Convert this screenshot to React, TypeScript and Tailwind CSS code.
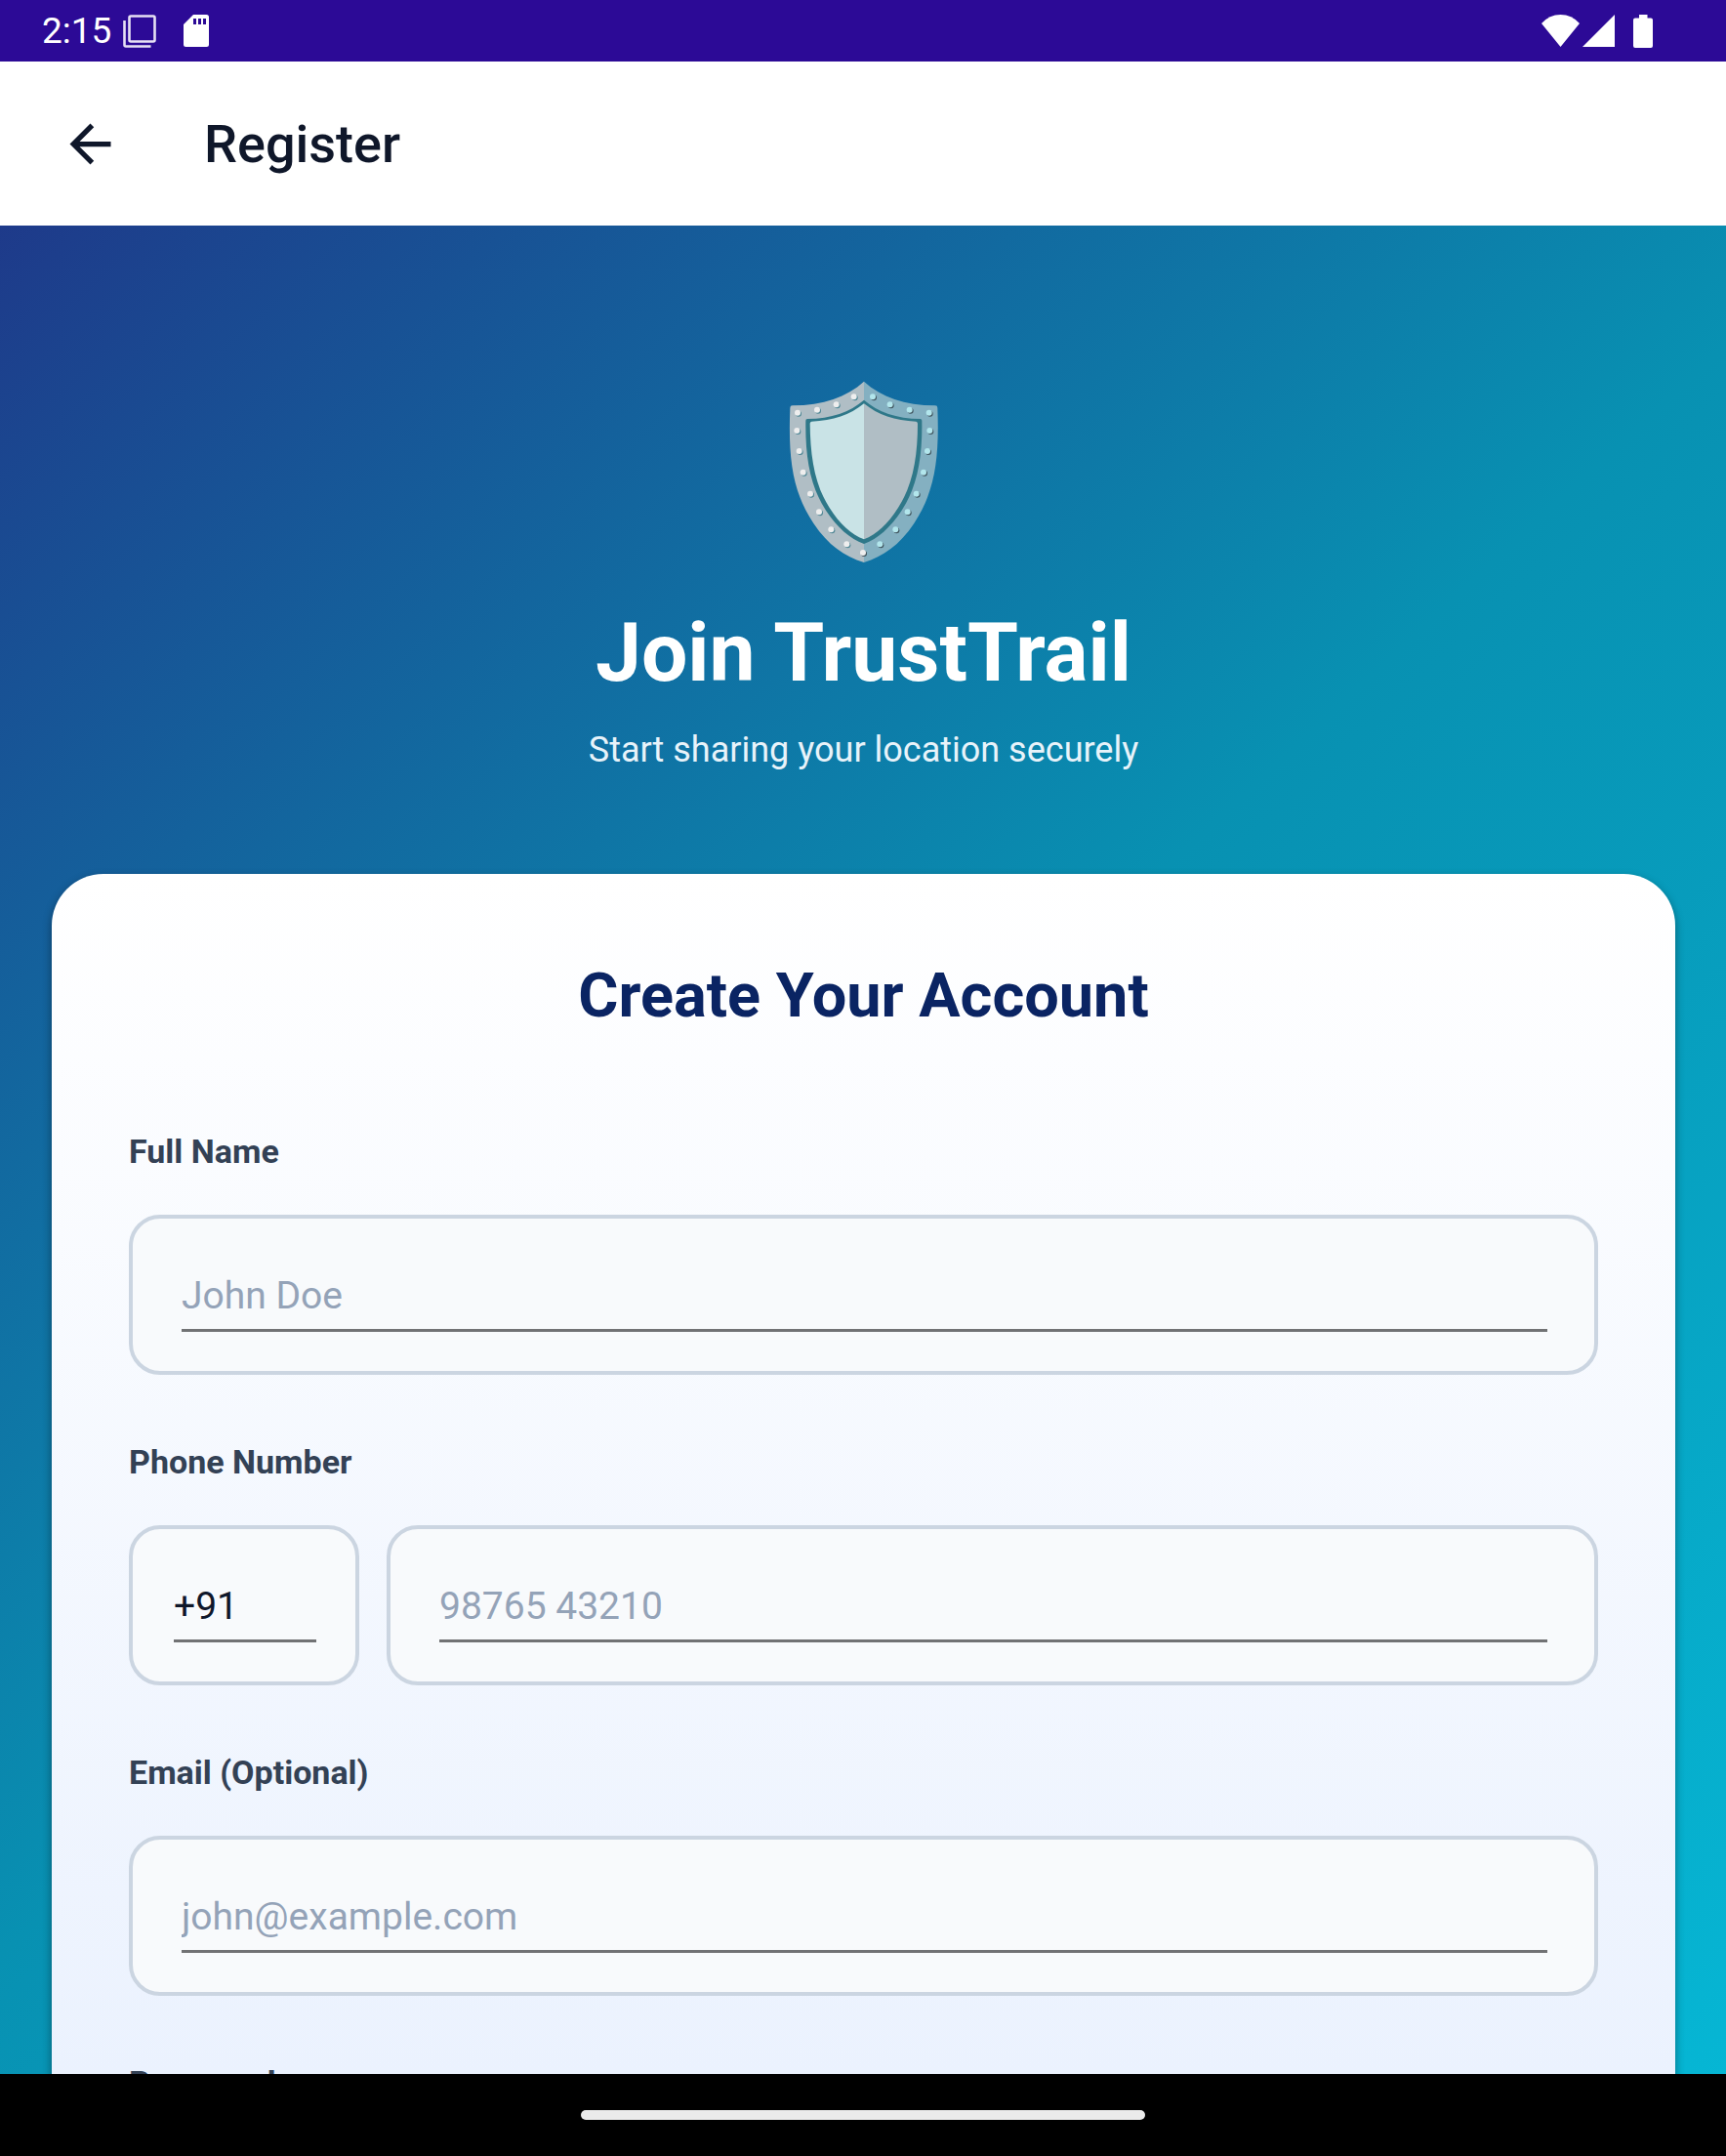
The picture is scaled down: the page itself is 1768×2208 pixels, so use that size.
import { useState } from 'react'
import type { ReactNode } from 'react'

const rivets = [
  [284, 109], [230, 133], [171, 149], [111, 158], [109, 213], [116, 276], [128, 341],
  [150, 407], [177, 463], [214, 517], [262, 562], [312, 588],
]

const rightRivets = [
  [342, 109], [395, 133], [455, 149], [515, 158], [517, 213], [510, 276], [498, 341],
  [476, 407], [449, 463], [412, 517], [364, 562],
]

function ShieldIcon() {
  return (
    <svg viewBox="84 60 462 561" className="h-[187px] w-[154px]" aria-hidden="true">
      <path
        fill="#b0bec5"
        d="M315 62C262 110 190 135 95 136Q88 136 88 143C82 300 95 400 160 498C205 565 255 600 315 618Z"
      />
      <path
        fill="#84b0c1"
        d="M315 62C368 110 440 135 534 136Q541 136 541 143C547 300 533 400 469 498C424 565 374 600 315 618Z"
      />
      <path
        fill="#2f7889"
        d="M315 119C272 156 215 176 141 177Q136 177 136 182C134 295 150 385 198 458C234 512 272 545 315 561C358 545 395 512 431 458C479 385 495 295 493 182Q493 177 488 177C415 176 358 156 315 119Z"
      />
      <path
        fill="#c9e3e6"
        d="M315 130C272 165 220 183 154 185Q149 186 149 191C150 295 164 380 209 450C241 500 275 532 315 547Z"
      />
      <path
        fill="#b0bec5"
        d="M315 130C358 165 410 183 475 185Q480 186 480 191C480 295 465 380 420 450C388 500 354 532 315 547Z"
      />
      {rivets.map(([x, y]) => (
        <g key={`${x}-${y}`}>
          <circle cx={x + 3} cy={y + 3} r="9" fill={x === 312 ? '#3f5059' : '#4f8795'} />
          <circle cx={x} cy={y} r="9" fill="#eeeeee" />
        </g>
      ))}
      {rightRivets.map(([x, y]) => (
        <g key={`${x}-${y}`}>
          <circle cx={x + 3} cy={y + 3} r="9" fill="#40545e" />
          <circle cx={x} cy={y} r="9" fill="#b2e6ec" />
        </g>
      ))}
    </svg>
  )
}

function StatusBar() {
  return (
    <div className="flex h-[63px] shrink-0 items-center justify-between bg-[#2c0a96] pr-[75px] pl-[43px] text-white">
      <div className="flex items-center">
        <span className="text-[37px] leading-[44px]">2:15</span>
        <svg viewBox="0 0 34 34" className="ml-[12px] h-[34px] w-[34px]" fill="none" stroke="#e6e0f4" strokeWidth="2.600" aria-hidden="true">
          <rect x="6.500" y="1.500" width="26" height="26" rx="1.500" />
          <path d="M1.500 6V31Q1.500 32.500 3 32.500H28.500" />
        </svg>
        <svg viewBox="0 0 26 33" className="ml-[28px] h-[33px] w-[26px]" aria-hidden="true">
          <path
            fill="#fff"
            fillRule="evenodd"
            d="M10 0H23.500Q26 0 26 2.500V30.500Q26 33 23.500 33H2.500Q0 33 0 30.500V10ZM10 4V10H13V4ZM15 4V10H18V4ZM20 4V10H23V4Z"
          />
        </svg>
      </div>
      <div className="flex items-center">
        <svg viewBox="0 0 39 33" className="h-[33px] w-[39px]" fill="#fff" aria-hidden="true">
          <path d="M0 9Q8 0 19.500 0T39 9L19.500 33Z" />
        </svg>
        <svg viewBox="0 0 33 33" className="ml-[3px] h-[33px] w-[33px]" fill="#fff" aria-hidden="true">
          <path d="M33 0V33H0Z" />
        </svg>
        <svg viewBox="0 0 20 34" className="ml-[19px] h-[34px] w-[20px]" fill="#fff" aria-hidden="true">
          <path d="M6 0H14.500V3.500H18Q20 3.500 20 5.500V32Q20 34 18 34H2Q0 34 0 32V5.500Q0 3.500 2 3.500H6Z" />
        </svg>
      </div>
    </div>
  )
}

function Header() {
  return (
    <header className="flex h-[168px] shrink-0 items-center bg-white pl-[61px] text-[#0f172a]">
      <button type="button" aria-label="Back">
        <svg viewBox="0 0 24 24" className="h-[63px] w-[63px]" fill="currentColor">
          <path d="M20 11H7.830l5.590-5.590L12 4l-8 8 8 8 1.410-1.410L7.830 13H20v-2z" />
        </svg>
      </button>
      <h1 className="ml-[85px] pt-[2px] text-[54px] leading-[64px] font-medium">Register</h1>
    </header>
  )
}

function Label({ htmlFor, children }: { htmlFor: string; children: ReactNode }) {
  return (
    <label htmlFor={htmlFor} className="mb-[45px] block text-[34px] leading-[40px] font-bold text-[#334155]">
      {children}
    </label>
  )
}

const boxClass = 'rounded-[32px] border-4 border-[#cbd5e1] bg-[#f8fafc] pt-[56px] pb-[40px]'
const inputClass =
  'block h-[60px] w-full min-w-0 border-b-[3px] border-[#717274] bg-transparent pb-[11px] text-[39px] leading-[46px] text-[#0f172a] outline-none placeholder:text-[#94a3b8]'

export default function App() {
  const [name, setName] = useState('')
  const [code, setCode] = useState('+91')
  const [phone, setPhone] = useState('')
  const [email, setEmail] = useState('')
  const [password, setPassword] = useState('')

  return (
    <div className="flex h-screen flex-col overflow-hidden font-['Roboto',sans-serif]">
      <StatusBar />
      <Header />

      <main className="min-h-0 flex-1 overflow-hidden bg-[linear-gradient(137deg,#1e3a8a,#0891b2,#06b6d4)] pt-[159px] pr-[52px] pl-[53px]">
        <div className="flex flex-col items-center text-center">
          <ShieldIcon />
          <h2 className="mt-[43px] text-[84px] leading-[98px] font-bold text-white">Join TrustTrail</h2>
          <p className="mt-[28px] text-[36px] leading-[44px] text-[#e8f3fa]">Start sharing your location securely</p>
        </div>

        <form className="mt-[105px] rounded-[53px] bg-[linear-gradient(180deg,#ffffff,#ebf2fe_1229px)] px-[79px] pt-[88px] pb-[80px] shadow-[0_4px_10px_rgba(0,0,0,0.4)]">
          <h3 className="mb-[102px] text-center text-[63px] leading-[74px] font-bold text-[#0a2463]">
            Create Your Account
          </h3>

          <div className="flex flex-col gap-[69px]">
            <div>
              <Label htmlFor="name">Full Name</Label>
              <div className={`${boxClass} pr-[48px] pl-[50px]`}>
                <input id="name" type="text" placeholder="John Doe" value={name} onChange={(e) => setName(e.target.value)} className={inputClass} />
              </div>
            </div>

            <div>
              <Label htmlFor="phone">Phone Number</Label>
              <div className="flex gap-[28px]">
                <div className={`${boxClass} w-[236px] shrink-0 pr-[40px] pl-[42px]`}>
                  <input type="text" aria-label="Country code" value={code} onChange={(e) => setCode(e.target.value)} className={inputClass} />
                </div>
                <div className={`${boxClass} min-w-0 flex-1 pr-[48px] pl-[50px]`}>
                  <input id="phone" type="tel" placeholder="98765 43210" value={phone} onChange={(e) => setPhone(e.target.value)} className={inputClass} />
                </div>
              </div>
            </div>

            <div>
              <Label htmlFor="email">Email (Optional)</Label>
              <div className={`${boxClass} pr-[48px] pl-[50px]`}>
                <input id="email" type="email" placeholder="john@example.com" value={email} onChange={(e) => setEmail(e.target.value)} className={inputClass} />
              </div>
            </div>

            <div>
              <Label htmlFor="password">Password</Label>
              <div className={`${boxClass} pr-[48px] pl-[50px]`}>
                <input id="password" type="password" value={password} onChange={(e) => setPassword(e.target.value)} className={inputClass} />
              </div>
            </div>
          </div>
        </form>
      </main>

      <nav className="flex h-[84px] shrink-0 items-center justify-center bg-black">
        <div className="h-[10px] w-[578px] rounded-[5px] bg-[#ebebeb]" />
      </nav>
    </div>
  )
}
